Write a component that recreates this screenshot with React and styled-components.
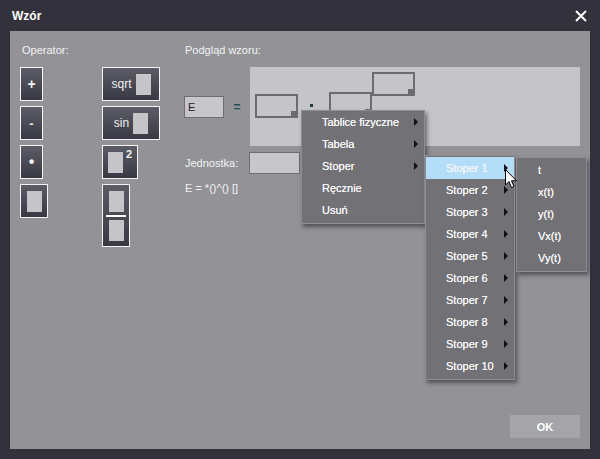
import React from "react";
import styled, { createGlobalStyle } from "styled-components";

const Global = createGlobalStyle`
  body { margin: 0; background: #33323c; font-family: "Liberation Sans", Arial, sans-serif; }
`;

const Frame = styled.div`
  position: relative;
  width: 600px;
  height: 459px;
  background: #33323c;
  display: flex;
  flex-direction: column;
  overflow: hidden;
`;

const TitleBar = styled.div`
  height: 31px;
  display: flex;
  align-items: center;
  justify-content: space-between;
  padding: 0 12px;
  color: #fff;
  font-weight: bold;
  font-size: 12px;
`;

const Close = styled.svg`
  width: 12px;
  height: 12px;
  margin-right: 1px;
`;

const Panel = styled.div`
  margin: 0 10px;
  height: 418px;
  background: #929297;
  display: flex;
  padding: 13px 10px 0;
  box-sizing: border-box;
  position: relative;
`;

const Label = styled.div`
  color: #f2f2f4;
  font-size: 11px;
  height: 13px;
  line-height: 13px;
  padding-left: 2px;
`;

const LeftCol = styled.div`
  width: 164px;
  display: flex;
  flex-direction: column;
  gap: 10px;
`;

const OpGrid = styled.div`
  display: grid;
  grid-template-columns: 82px 60px;
  grid-auto-rows: 34px;
  row-gap: 5px;
  align-items: start;
`;

const OpButton = styled.div`
  box-sizing: border-box;
  width: ${(p) => p.w}px;
  height: ${(p) => p.h || 34}px;
  grid-row: ${(p) => (p.span ? `span ${p.span}` : "auto")};
  border: 1.5px solid #f4f4f6;
  background: linear-gradient(#5c5c67, #393943);
  color: #f0f0f2;
  display: flex;
  flex-direction: ${(p) => (p.column ? "column" : "row")};
  align-items: center;
  justify-content: center;
  gap: ${(p) => p.gap || 0}px;
  font-size: ${(p) => p.fs || 12}px;
  font-weight: ${(p) => (p.light ? "normal" : "bold")};
`;

const Slot = styled.div`
  width: ${(p) => p.w || 15}px;
  height: ${(p) => p.h || 21}px;
  background: #c4c4c9;
`;

const FracLine = styled.div`
  width: 20px;
  height: 2px;
  background: #fff;
  margin: 3px 0;
`;

const Sup = styled.span`
  font-size: 11px;
  font-weight: bold;
  align-self: flex-start;
  margin-top: 2px;
`;

const RightCol = styled.div`
  flex: 1;
  display: flex;
  flex-direction: column;
`;

const FormulaRow = styled.div`
  display: flex;
  align-items: center;
  margin-top: 10px;
  padding-left: 1px;
`;

const Input = styled.div`
  box-sizing: border-box;
  width: ${(p) => p.w}px;
  height: 22px;
  background: #c6c6cb;
  border: 1px solid #6e6e73;
  color: #222;
  font-size: 11px;
  line-height: 20px;
  padding-left: 3px;
`;

const Eq = styled.div`
  width: 26px;
  text-align: center;
  color: #1f4d54;
  font-size: 12px;
  font-weight: bold;
`;

const Preview = styled.div`
  width: 330px;
  height: 79px;
  background: #c4c4c9;
  display: flex;
  align-items: flex-start;
  padding: 5px 0 0 5px;
  box-sizing: border-box;
`;

const Box = styled.div`
  box-sizing: border-box;
  width: 43px;
  height: 24px;
  border: 2px solid #6b6b70;
  margin-top: ${(p) => p.mt || 0}px;
  position: relative;
  &::after {
    content: "";
    position: absolute;
    right: -1px;
    bottom: -1px;
    width: 6px;
    height: 6px;
    background: #6b6b70;
  }
`;

const Dot = styled.div`
  width: 3px;
  height: 3px;
  background: #1c3c40;
  margin: 32px 16px 0 12px;
`;

const UnitRow = styled.div`
  display: flex;
  align-items: center;
  margin-top: 6px;
  gap: 11px;
`;

const Syntax = styled(Label)`
  margin-top: 8px;
`;

const OkButton = styled.div`
  position: absolute;
  right: 10px;
  bottom: 11px;
  width: 70px;
  height: 23px;
  background: #a4a4a9;
  color: #fff;
  font-size: 11px;
  font-weight: bold;
  display: flex;
  align-items: center;
  justify-content: center;
`;

const Menu = styled.div`
  position: absolute;
  left: ${(p) => p.x}px;
  top: ${(p) => p.y}px;
  width: ${(p) => p.w}px;
  box-sizing: border-box;
  padding: ${(p) => (p.flush ? 0 : 1)}px 0 2px;
  background: #717176;
  border: 1px solid #8d8d92;
  box-shadow: 2px 3px 4px rgba(30, 30, 38, 0.55);
  display: flex;
  flex-direction: column;
`;

const Item = styled.div`
  height: 22px;
  display: flex;
  align-items: center;
  padding-left: ${(p) => p.pad}px;
  padding-right: 6px;
  font-size: 11px;
  color: #f4f4f6;
  background: ${(p) => (p.active ? "#b4ddf8" : "transparent")};
  text-shadow: 0 0 0.4px #fff;
`;

const ItemText = styled.span`
  flex: 1;
`;

const Arrow = styled.span`
  width: 0;
  height: 0;
  border-top: 4px solid transparent;
  border-bottom: 4px solid transparent;
  border-left: 4px solid #111;
`;

const Cursor = styled.svg`
  position: absolute;
  left: 505px;
  top: 169px;
  width: 13px;
  height: 20px;
`;

export default function App() {
  const stopers = Array.from({ length: 10 }, (_, i) => `Stoper ${i + 1}`);
  return (
    <Frame>
      <Global />
      <TitleBar>
        <span>Wzór</span>
        <Close viewBox="0 0 12 12">
          <path d="M1 1L11 11M11 1L1 11" stroke="#fff" strokeWidth="2" />
        </Close>
      </TitleBar>
      <Panel>
        <LeftCol>
          <Label>Operator:</Label>
          <OpGrid>
            <OpButton w={23} fs={14}>+</OpButton>
            <OpButton w={58} gap={4} light>
              <span>sqrt</span>
              <Slot />
            </OpButton>
            <OpButton w={23} fs={13}>-</OpButton>
            <OpButton w={58} gap={4} light>
              <span>sin</span>
              <Slot />
            </OpButton>
            <OpButton w={23} fs={16}>•</OpButton>
            <OpButton w={36} gap={3}>
              <Slot />
              <Sup>2</Sup>
            </OpButton>
            <OpButton w={28}>
              <Slot />
            </OpButton>
            <OpButton w={28} h={63} span={2} column>
              <Slot />
              <FracLine />
              <Slot />
            </OpButton>
          </OpGrid>
        </LeftCol>
        <RightCol>
          <Label>Podgląd wzoru:</Label>
          <FormulaRow>
            <Input w={40}>E</Input>
            <Eq>=</Eq>
            <Preview>
              <Box mt={22} />
              <Dot />
              <Box mt={20} />
              <Box />
            </Preview>
          </FormulaRow>
          <UnitRow>
            <Label>Jednostka:</Label>
            <Input w={51} />
          </UnitRow>
          <Syntax>E = *()^() []</Syntax>
        </RightCol>
        <OkButton>OK</OkButton>
      </Panel>

      <Menu x={301} y={110} w={124} flush>
        {["Tablice fizyczne", "Tabela", "Stoper"].map((t) => (
          <Item key={t} pad={20}>
            <ItemText>{t}</ItemText>
            <Arrow />
          </Item>
        ))}
        <Item pad={20}>
          <ItemText>Ręcznie</ItemText>
        </Item>
        <Item pad={20}>
          <ItemText>Usuń</ItemText>
        </Item>
      </Menu>

      <Menu x={425} y={155} w={90}>
        {stopers.map((t, i) => (
          <Item key={t} pad={20} active={i === 0}>
            <ItemText>{t}</ItemText>
            <Arrow />
          </Item>
        ))}
      </Menu>

      <Menu x={516} y={157} w={71}>
        {["t", "x(t)", "y(t)", "Vx(t)", "Vy(t)"].map((t) => (
          <Item key={t} pad={21}>
            <ItemText>{t}</ItemText>
          </Item>
        ))}
      </Menu>

      <Cursor viewBox="0 0 13 20">
        <path
          d="M0.5 0.5L0.5 16L4 12.5L6.5 18.5L9 17.5L6.5 11.8L11.5 11.8Z"
          fill="#fff"
          stroke="#000"
          strokeWidth="1"
          strokeLinejoin="round"
        />
      </Cursor>
    </Frame>
  );
}
